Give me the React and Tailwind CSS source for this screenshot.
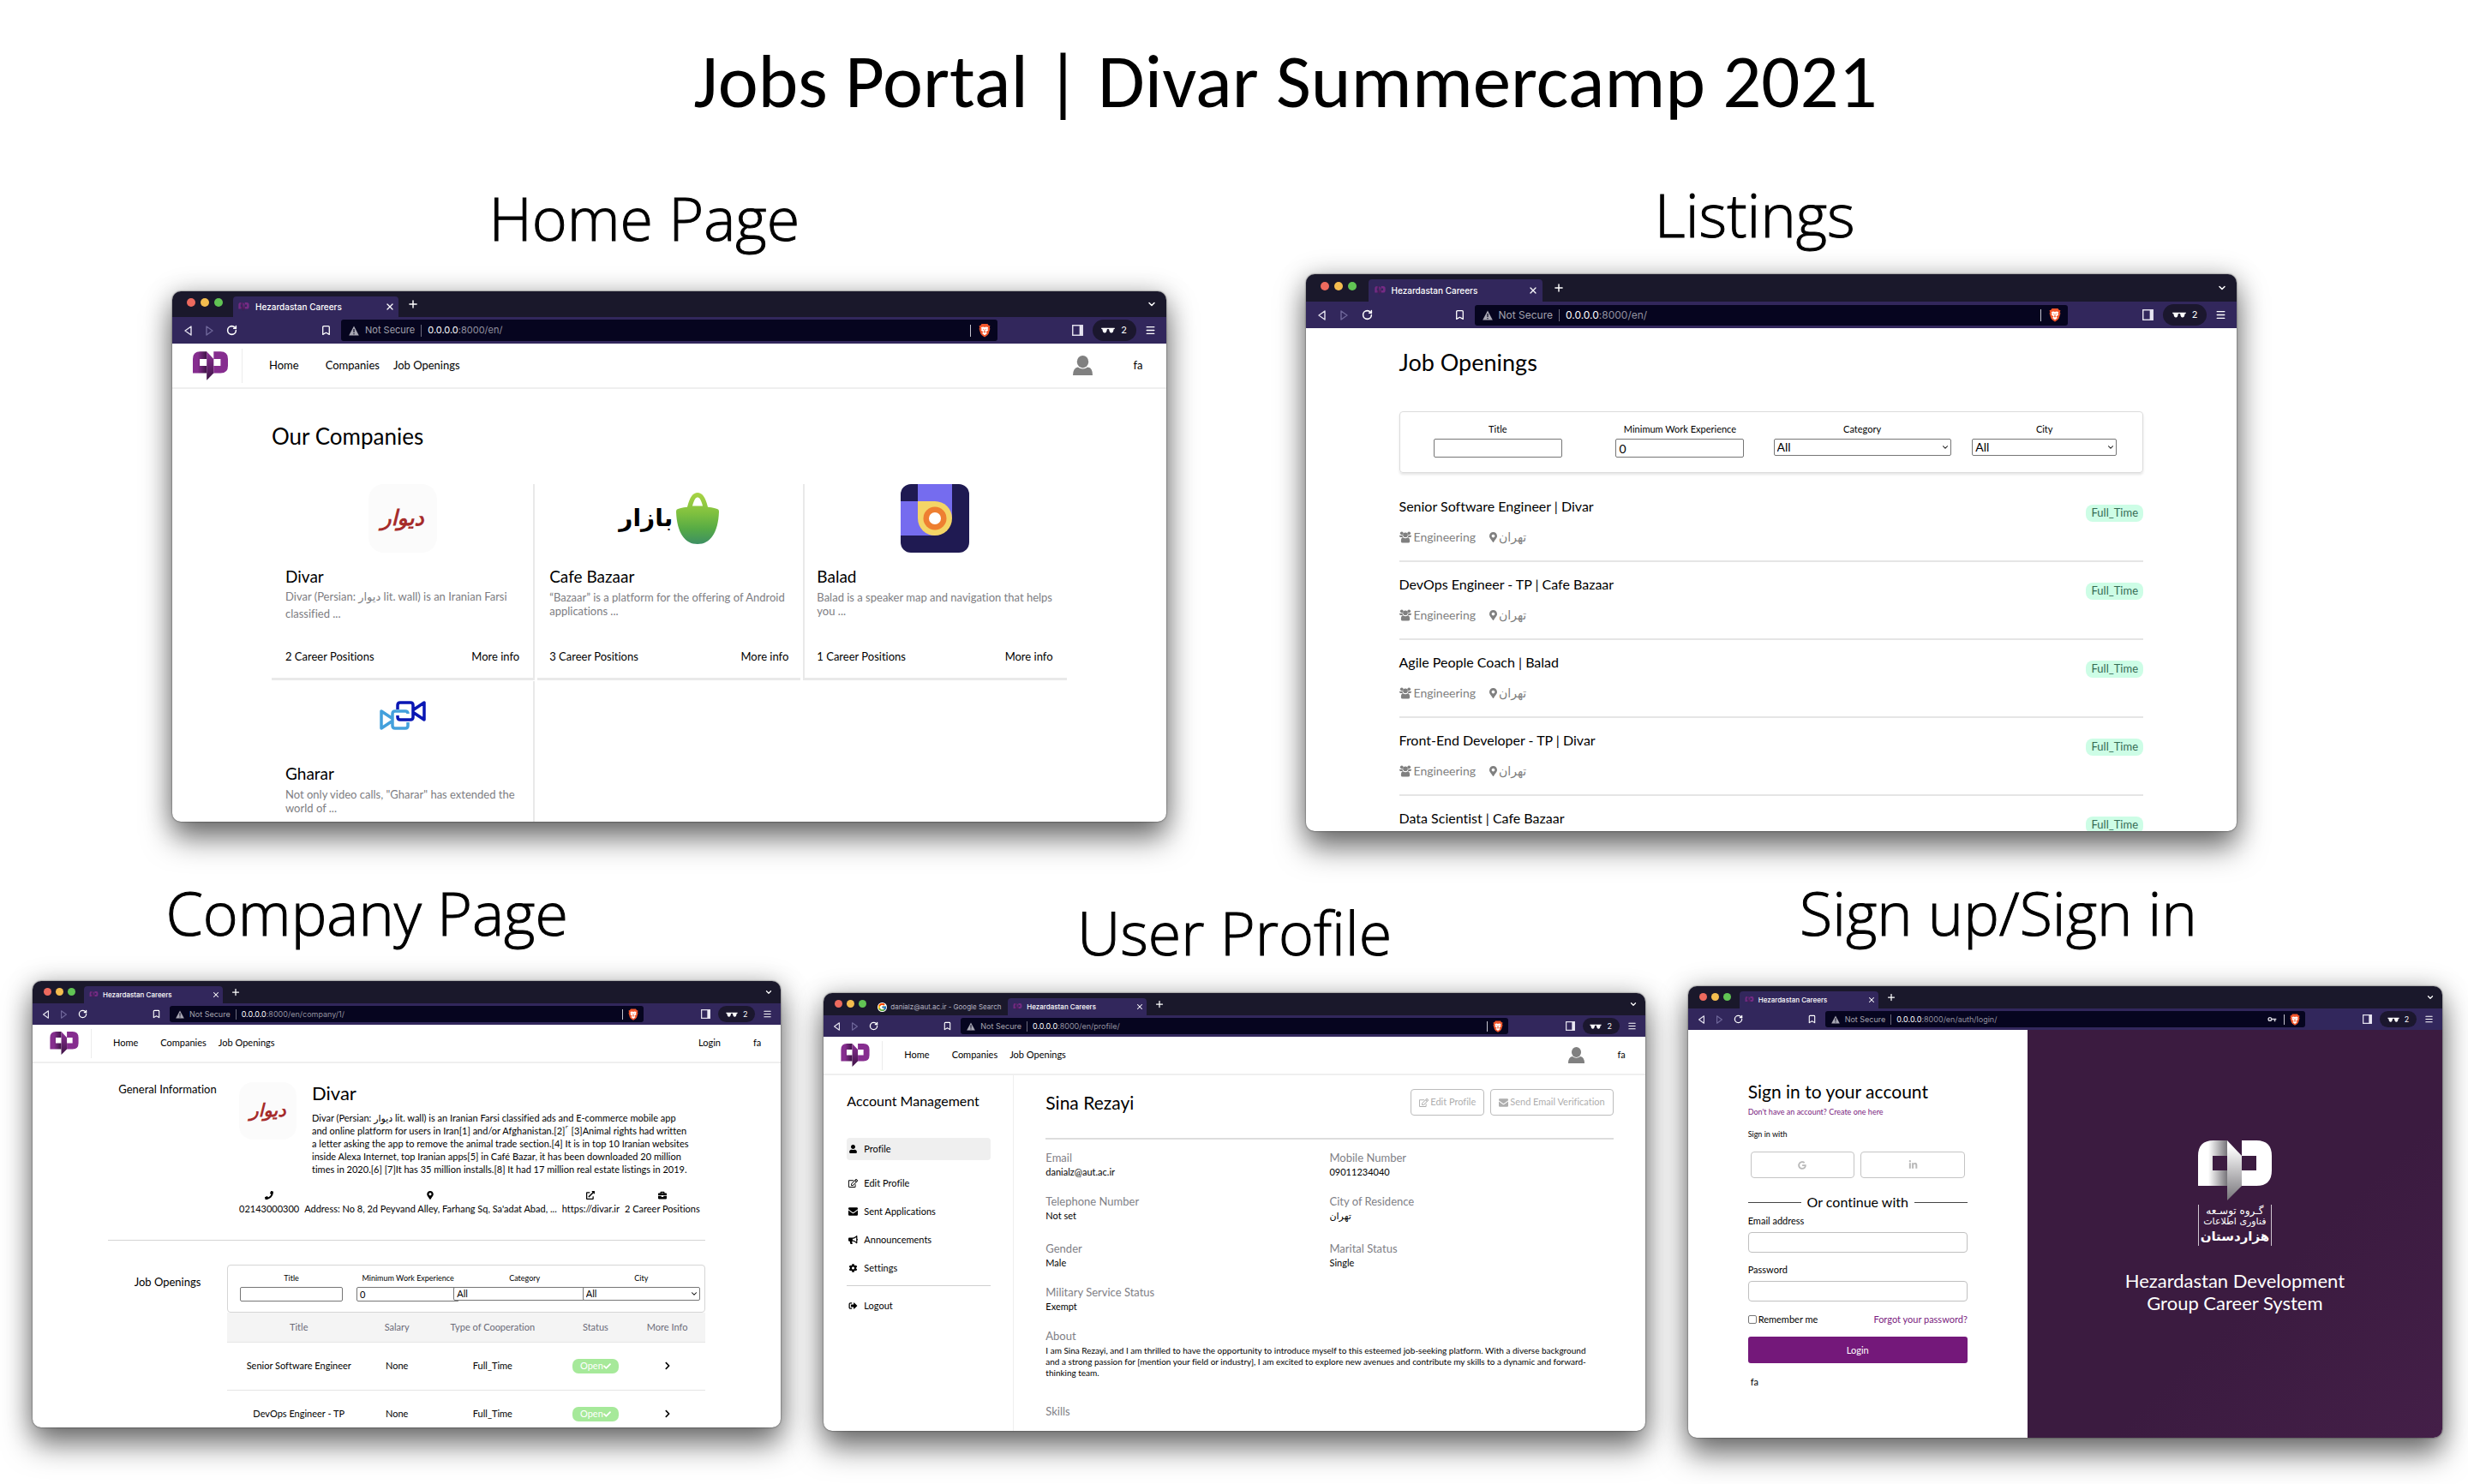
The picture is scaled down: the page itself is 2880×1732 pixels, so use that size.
import React, { useId } from 'react';
import {
  FaMapMarkerAlt, FaPhone, FaExternalLinkAlt, FaBriefcase, FaChevronRight, FaCheck,
  FaUser, FaRegEdit, FaBullhorn, FaCog, FaSignOutAlt, FaGoogle, FaLinkedinIn,
} from 'react-icons/fa';
import { FcGoogle } from 'react-icons/fc';
import { X, Plus, ChevronDown, Bookmark, RotateCw, Menu } from 'lucide-react';

/* ---------- logos and small drawings ---------- */

function HezardastanLogo({ className, tone = 'purple' }) {
  const id = useId();
  const purple = tone === 'purple';
  const main = purple ? '#862d8f' : '#ffffff';
  const shade = purple ? '#3d1345' : '#77757a';
  return (
    <svg viewBox="0 0 86 70" className={className} aria-label="Hezardastan" role="img">
      <defs>
        <linearGradient id={id + 'l'} x1="0" x2="1" y1="0" y2="0">
          <stop offset="0.35" stopColor={main} />
          <stop offset="1" stopColor={shade} />
        </linearGradient>
        <linearGradient id={id + 'r'} x1="0" x2="0" y1="0" y2="1">
          <stop offset="0.1" stopColor={main} />
          <stop offset="1" stopColor={shade} />
        </linearGradient>
      </defs>
      <path fillRule="evenodd" fill={`url(#${id}l)`} d="M0 53V18Q0 0 18 0H34V53ZM17 18V35H34V18Z" />
      <path fillRule="evenodd" fill={main} d="M51 0H68Q86 0 86 18V35Q86 53 68 53H51ZM51 18V35H68V18Z" />
      <path fill={`url(#${id}r)`} d="M34 0L51 18V53L34 70Z" />
    </svg>
  );
}

function DivarLogo({ small }) {
  return (
    <div
      lang="fa"
      className={
        'flex shrink-0 items-center justify-center bg-[#fbfbfb] font-["DejaVu_Sans",sans-serif] font-bold italic text-[#a62c2b] ' +
        (small ? 'h-[67px] w-[67px] rounded-[16px] text-[21px]' : 'h-20 w-20 rounded-[18px] text-[25px]')
      }
    >
      دیوار
    </div>
  );
}

function BazaarLogo() {
  const id = useId();
  return (
    <div className="flex h-20 items-center justify-center gap-1">
      <span lang="fa" className="font-['DejaVu_Sans',sans-serif] text-[28px] font-bold text-black">بازار</span>
      <svg viewBox="0 0 50 54" className="h-[60px] w-[50px]" preserveAspectRatio="none" aria-hidden="true">
        <defs>
          <linearGradient id={id} x1="0" x2="0" y1="0" y2="1">
            <stop offset="0" stopColor="#a9d444" />
            <stop offset="0.4" stopColor="#7fc03f" />
            <stop offset="0.7" stopColor="#57ab45" />
            <stop offset="1" stopColor="#3d8f63" />
          </linearGradient>
        </defs>
        <path
          fillRule="evenodd"
          fill={`url(#${id})`}
          d="M13 15C16 4 20 0 25 0S34 4 37 15C43 15.500 47 16.500 49 17.500Q50 18 50 20C49 42 40 54 25 54S1 42 0 20Q0 18 1 17.500C3 16.500 7 15.500 13 15ZM19 14H31C29 7 27 5 25 5S21 7 19 14Z"
        />
      </svg>
    </div>
  );
}

function BaladLogo() {
  return (
    <svg viewBox="0 0 80 80" className="h-20 w-20 rounded-[12px]" aria-hidden="true">
      <rect width="80" height="80" fill="#1f1a52" />
      <rect x="20" width="40" height="40" fill="#756cef" />
      <rect y="20" width="40" height="40" fill="#756cef" />
      <path d="M0 40H20V60H40V40Z" fill="#756cef" />
      <rect y="40" width="40" height="20" fill="#756cef" />
      <path d="M20 20H40A20 20 0 1 1 20 40Z" fill="#f4d566" />
      <circle cx="40" cy="40" r="13.500" fill="#ee7f31" />
      <circle cx="40" cy="40" r="7" fill="#fff" />
    </svg>
  );
}

function GhararLogo() {
  return (
    <div className="flex h-20 w-20 items-center justify-center">
      <svg viewBox="0 0 54 34" className="h-[34px] w-[54px]" fill="none" strokeWidth="3.500" strokeLinejoin="round" aria-hidden="true">
        <path stroke="#0a17b4" d="M21 10V5Q21 2 24 2H36Q39 2 39 5V19Q39 22 36 22H24Q21 22 21 19V17M40 10L52 2V22L40 14" />
        <path stroke="#43a0dc" d="M33 15Q33 12 30 12H18Q15 12 15 15V29Q15 32 18 32H30Q33 32 33 29V25M14 20L2 12V32L14 24" />
      </svg>
    </div>
  );
}

function BraveIcon({ className }) {
  return (
    <svg viewBox="0 0 24 28" className={className} aria-hidden="true">
      <path fill="#f1562b" d="M6 1H18L20 4L23 5L22 9L23 11L20 21Q19 24 12 27.500Q5 24 4 21L1 11L2 9L1 5L4 4Z" />
      <path fill="#fff" d="M5 8L9 7L12 8L15 7L19 8L18 12L19 14L15 17L15 18L17 20L12 24L7 20L9 18L9 17L5 14L6 12Z" />
      <path fill="#f1562b" d="M8 10.500L11 12L10.500 14ZM16 10.500L13 12L13.500 14ZM11 14H13L13 17L14.500 18L12 19L9.500 18L11 17Z" />
    </svg>
  );
}

function Sunglasses({ className }) {
  return (
    <svg viewBox="0 0 20 9" className={className} fill="currentColor" aria-hidden="true">
      <path d="M0 1H20V2.500L18.500 3Q18 8.500 15 8.500T11.500 3Q10 2.200 8.500 3Q8 8.500 5 8.500T1.500 3L0 2.500Z" />
    </svg>
  );
}

function PersonIcon({ className }) {
  return (
    <svg viewBox="0 0 24 24" className={className} fill="#808080" aria-hidden="true">
      <ellipse cx="12" cy="7.500" rx="7" ry="7.500" />
      <path d="M0 24Q0 15 6 14Q12 18.500 18 14Q24 15 24 24Z" />
    </svg>
  );
}

function GroupIcon({ className }) {
  return (
    <svg viewBox="0 0 30 28" className={className} fill="currentColor" aria-hidden="true">
      <circle cx="6" cy="4" r="4" />
      <circle cx="24" cy="4" r="4" />
      <circle cx="15" cy="8" r="6" />
      <path d="M0 9Q6 10.500 8 8Q7 12 9 14H3Q0 14 0 11ZM30 9Q24 10.500 22 8Q23 12 21 14H27Q30 14 30 11Z" />
      <path d="M4 24Q4 15 9 14.500Q15 18.500 21 14.500Q26 15 26 24Q26 28 22 28H8Q4 28 4 24Z" />
    </svg>
  );
}

function EnvelopeIcon({ className }) {
  return (
    <svg viewBox="0 0 14 12" className={className} fill="currentColor" aria-hidden="true">
      <path d="M1.500 0H12.500Q14 0 14 1.500V2.500L8 7Q7 7.800 6 7L0 2.500V1.500Q0 0 1.500 0Z" />
      <path d="M0 4L5.500 8.200Q7 9.300 8.500 8.200L14 4V10.500Q14 12 12.500 12H1.500Q0 12 0 10.500Z" />
    </svg>
  );
}

function Triangle({ dim, className }) {
  return (
    <svg viewBox="0 0 10 12" className={className} fill="none" strokeWidth="1.400" strokeLinejoin="round" stroke={dim ? '#6f679a' : '#e4e2ee'} aria-hidden="true">
      {dim ? <path d="M1.500 1L8.500 6L1.500 11Z" /> : <path d="M8.500 1L1.500 6L8.500 11Z" />}
    </svg>
  );
}

function WarningIcon({ className }) {
  return (
    <svg viewBox="0 0 12 12" className={className} aria-hidden="true">
      <path d="M6 0.500L11.800 11.500H0.200Z" fill="#a9a8b4" />
      <path d="M5.400 4H6.600V8H5.400ZM5.400 9H6.600V10.200H5.400Z" fill="#06051f" />
    </svg>
  );
}

function PanelIcon({ className }) {
  return (
    <svg viewBox="0 0 12 12" className={className} aria-hidden="true">
      <rect x="0.700" y="0.700" width="10.600" height="10.600" fill="none" stroke="#e9e7f2" strokeWidth="1.300" />
      <rect x="8" y="1" width="3" height="10" fill="#e9e7f2" />
    </svg>
  );
}

function KeyIcon({ className }) {
  return (
    <svg viewBox="0 0 12 8" className={className} fill="none" stroke="#d6d5de" strokeWidth="1.600" aria-hidden="true">
      <circle cx="3" cy="4" r="2.100" />
      <path d="M5 4H11.500M9.500 4V7" />
    </svg>
  );
}

/* ---------- browser chrome ---------- */

const LG = {
  bar: 'h-[30px] pl-[17px]', lights: 'gap-[6px] pb-1', light: 'h-[10px] w-[10px]', tabs: 'ml-3', tab: 'h-6 w-[193px] pl-[6px] pr-1',
  fav: 'h-[10px] w-[13px]', tabText: 'ml-[7px] text-[10px]', x: 'h-3 w-3', plus: 'ml-[10px] h-[14px] w-[14px]', down: 'mr-[11px] h-3 w-3',
  tool: 'h-[31px]', side: 'w-[197px]', left: 'pl-[13px] pr-[11px]', nav: 'gap-[14px]', tri: 'h-3 w-[11px]', icon: 'h-[13px] w-[13px]',
  url: 'h-[25px] rounded-[3px] text-[11px]', warn: 'ml-[9px] mr-[7px] h-3 w-3', sep: 'mx-[7px] h-[14px]', shield: 'ml-[9px] mr-2 h-[17px] w-[14px]',
  pill: 'ml-[11px] mr-[10px] h-[25px] w-[51px] text-[11px] gap-[7px]', glasses: 'h-[7px] w-4', right: 'pr-3', sepR: 'h-[14px]',
};

const SIZES = {
  lg: LG,
  xl: {
    ...LG,
    bar: 'h-8 pl-[17px]', tabs: 'ml-[14px]', tab: 'h-[26px] w-[203px] pl-[7px] pr-[5px]', tabText: 'ml-[7px] text-[10px]', plus: 'ml-3 h-[14px] w-[14px]',
    url: 'h-6 rounded-[3px] text-[12px]', nav: 'gap-[15px]',
  },
  sm: {
    bar: 'h-[26px] pl-[13px]', lights: 'gap-[5px] pb-px', light: 'h-[9px] w-[9px]', tabs: 'ml-[10px]', tab: 'h-5 w-[162px] pl-[6px] pr-[3px]',
    fav: 'h-2 w-[11px]', tabText: 'ml-[5px] text-[8px]', x: 'h-[10px] w-[10px]', plus: 'ml-[9px] h-3 w-3', down: 'mr-[9px] h-[10px] w-[10px]',
    tool: 'h-[25px]', side: 'w-[160px]', left: 'pl-[11px] pr-[10px]', nav: 'gap-[12px]', tri: 'h-[10px] w-[9px]', icon: 'h-[11px] w-[11px]',
    url: 'h-[19px] rounded-[3px] text-[9px]', warn: 'ml-[7px] mr-[6px] h-[10px] w-[10px]', sep: 'mx-[6px] h-3', shield: 'ml-[6px] mr-[6px] h-[14px] w-3',
    pill: 'ml-[9px] mr-[9px] h-[19px] w-[43px] text-[9px] gap-[6px]', glasses: 'h-[6px] w-[14px]', right: 'pr-[10px]', sepR: 'h-3',
  },
};

function BrowserWindow({ size = 'sm', path, extraTab, hasKey, className = '', children }) {
  const s = SIZES[size];
  return (
    <div className={'flex flex-col overflow-hidden rounded-[10px] bg-white shadow-[0_0_2px_rgba(0,0,0,0.7),0_20px_34px_rgba(0,0,0,0.5),0_2px_30px_rgba(0,0,0,0.25)] ' + className}>
      <div className={'flex shrink-0 items-center bg-[#1a182b] text-white ' + s.bar}>
        <div className={'flex shrink-0 ' + s.lights}>
          <span className={'rounded-full bg-[#ed6a5e] ' + s.light} />
          <span className={'rounded-full bg-[#f4bd4f] ' + s.light} />
          <span className={'rounded-full bg-[#61c454] ' + s.light} />
        </div>
        <div className={'flex items-end self-end ' + s.tabs}>
          {extraTab && (
            <div className="flex h-5 w-[155px] items-center gap-1 pl-[3px] font-['Inter',sans-serif] text-[8px] text-[#b5b3c2]">
              <FcGoogle className="h-[11px] w-[11px] rounded-full bg-white" />
              <span className="whitespace-nowrap">{extraTab}</span>
            </div>
          )}
          <div className={'flex items-center rounded-t-[4px] bg-[#32275c] ' + s.tab}>
            <HezardastanLogo className={'opacity-80 ' + s.fav} />
            <span className={"whitespace-nowrap font-['Inter',sans-serif] font-medium " + s.tabText}>Hezardastan Careers</span>
            <button aria-label="Close tab" className="ml-auto"><X strokeWidth={2.5} className={s.x} /></button>
          </div>
        </div>
        <button aria-label="New tab"><Plus strokeWidth={2.5} className={s.plus} /></button>
        <button aria-label="List tabs" className="ml-auto"><ChevronDown strokeWidth={3} className={s.down} /></button>
      </div>
      <div className={"flex shrink-0 items-center bg-[#32275c] font-['Inter',sans-serif] text-white " + s.tool}>
        <div className={'flex shrink-0 items-center justify-between ' + s.side + ' ' + s.left}>
          <div className={'flex items-center ' + s.nav}>
            <button aria-label="Back"><Triangle className={s.tri} /></button>
            <button aria-label="Forward"><Triangle dim className={s.tri} /></button>
            <button aria-label="Reload"><RotateCw strokeWidth={2.8} className={s.icon} /></button>
          </div>
          <button aria-label="Bookmark"><Bookmark strokeWidth={2.4} className={s.icon} /></button>
        </div>
        <div className={'flex min-w-0 flex-1 items-center bg-[#06051f] ' + s.url}>
          <WarningIcon className={s.warn} />
          <span className="whitespace-nowrap text-[#a3a2ae]">Not Secure</span>
          <span className={'w-px bg-[#6b6a7d] ' + s.sep} />
          <span className="whitespace-nowrap text-white">0.0.0.0<span className="text-[#92919f]">:8000{path}</span></span>
          <span className="ml-auto flex items-center">
            {hasKey && <KeyIcon className="mr-2 h-[7px] w-[11px]" />}
            <span className={'w-px bg-[#c5c4cf] ' + s.sepR} />
            <BraveIcon className={s.shield} />
          </span>
        </div>
        <div className={'flex shrink-0 items-center justify-end ' + s.side + ' ' + s.right}>
          <button aria-label="Side panel"><PanelIcon className={s.icon} /></button>
          <button className={'flex items-center justify-center rounded-full bg-[#1b172e] ' + s.pill}>
            <Sunglasses className={s.glasses} />2
          </button>
          <button aria-label="Menu"><Menu strokeWidth={2.4} className={s.icon} /></button>
        </div>
      </div>
      {children}
    </div>
  );
}

function NavBar({ size = 'sm', user }) {
  const lg = size === 'lg';
  return (
    <nav className={'flex shrink-0 items-center border-b-2 border-[#efefef] ' + (lg ? 'h-[53px] pl-6 pr-[27px] text-[13px]' : 'h-[45px] pl-5 pr-[23px] text-[11px]')}>
      <HezardastanLogo className={lg ? 'h-[34px] w-[41px]' : 'h-[27px] w-[34px]'} />
      <span className={'w-px bg-[#ececec] ' + (lg ? 'ml-4 mr-[31px] h-10' : 'ml-[14px] mr-[25px] h-[34px]')} />
      <a href="#home">Home</a>
      <a href="#companies" className={lg ? 'ml-[31px]' : 'ml-[26px]'}>Companies</a>
      <a href="#jobs" className={lg ? 'ml-4' : 'ml-[14px]'}>Job Openings</a>
      <span className="ml-auto flex items-center">
        {user
          ? <a href="#account" aria-label="Account"><PersonIcon className={lg ? 'h-[23px] w-[23px]' : 'h-[19px] w-[19px]'} /></a>
          : <a href="#login">Login</a>}
      </span>
      <a href="#fa" className={lg ? 'ml-[48px]' : 'ml-[38px]'}>fa</a>
    </nav>
  );
}

/* ---------- filters ---------- */

function FilterSelect({ label, className }) {
  const id = useId();
  return (
    <div className="flex flex-col items-center">
      <label htmlFor={id}>{label}</label>
      <div className={'relative mt-1 shrink-0 ' + className}>
        <select id={id} className="h-full w-full appearance-none rounded-[2px] border border-[#767676] bg-white pl-[3px]">
          <option>All</option>
        </select>
        <ChevronDown className="pointer-events-none absolute top-1/2 right-[2px] h-[10px] w-[10px] -translate-y-1/2" strokeWidth={2.5} />
      </div>
    </div>
  );
}

function FilterInput({ label, className, ...rest }) {
  const id = useId();
  return (
    <div className="flex flex-col items-center whitespace-nowrap">
      <label htmlFor={id}>{label}</label>
      <input id={id} className={'mt-1 shrink-0 rounded-[2px] border border-[#767676] bg-white pl-[3px] ' + className} {...rest} />
    </div>
  );
}

/* ---------- pages ---------- */

const COMPANIES = [
  { name: 'Divar', logo: <DivarLogo />, lines: ['Divar (Persian: دیوار lit. wall) is an Iranian Farsi', 'classified ...'], jobs: 2, tall: true, edge: 'border-b-3 border-r-2 px-4' },
  { name: 'Cafe Bazaar', logo: <BazaarLogo />, lines: ['“Bazaar” is a platform for the offering of Android', 'applications ...'], jobs: 3, edge: 'border-b-3 px-[14px]' },
  { name: 'Balad', logo: <BaladLogo />, lines: ['Balad is a speaker map and navigation that helps', 'you ...'], jobs: 1, edge: 'border-b-3 border-l-2 pl-[14px] pr-4' },
  { name: 'Gharar', logo: <GhararLogo />, lines: ['Not only video calls, "Gharar" has extended the', 'world of ...'], edge: 'border-r-2 px-4' },
];

function HomePage() {
  return (
    <BrowserWindow size="lg" path="/en/" className="h-[619px]">
      <NavBar size="lg" user />
      <main className="px-[116px] pt-[39px]">
        <h3 className="text-[26px] leading-8">Our Companies</h3>
        <div className="mt-10 grid grid-cols-3 gap-x-[3px] gap-y-px">
          {COMPANIES.map((c) => (
            <article key={c.name} className={'flex h-[229px] flex-col border-[#e9e9e9] pb-[17px] ' + c.edge}>
              <div className="flex justify-center">{c.logo}</div>
              <h4 className="mt-4 text-[19px] leading-6">{c.name}</h4>
              <p className={'whitespace-nowrap text-[13px] text-[#7d7d82] ' + (c.tall ? 'mt-px leading-5' : 'mt-1 leading-4')}>
                {c.lines[0]}<br />{c.lines[1]}
              </p>
              {c.jobs && (
                <div className="mt-auto flex justify-between text-[13px] leading-4">
                  <span>{c.jobs} Career Positions</span>
                  <a href="#company">More info</a>
                </div>
              )}
            </article>
          ))}
        </div>
      </main>
    </BrowserWindow>
  );
}

const LISTINGS = [
  { title: 'Senior Software Engineer | Divar', team: 'Engineering', city: 'تهران' },
  { title: 'DevOps Engineer - TP | Cafe Bazaar', team: 'Engineering', city: 'تهران' },
  { title: 'Agile People Coach | Balad', team: 'Engineering', city: 'تهران' },
  { title: 'Front-End Developer - TP | Divar', team: 'Engineering', city: 'تهران' },
  { title: 'Data Scientist | Cafe Bazaar' },
];

function ListingsPage() {
  return (
    <BrowserWindow size="xl" path="/en/" className="h-[650px]">
      <main className="px-[109px] pt-6">
        <h3 className="text-[27px] leading-8">Job Openings</h3>
        <form className="mt-[41px] grid h-[72px] grid-cols-4 rounded-[4px] border border-[#dcdcdc] px-2 pt-[13px] text-[11px] leading-[14px] shadow-[0_2px_3px_rgba(0,0,0,0.1)]">
          <FilterInput label="Title" type="text" className="h-[22px] w-[150px] text-[14px]" />
          <FilterInput label="Minimum Work Experience" type="number" defaultValue="0" className="h-[22px] w-[150px] text-[14px]" />
          <FilterSelect label="Category" className="h-5 w-[207px] text-[14px]" />
          <FilterSelect label="City" className="h-5 w-[169px] text-[14px]" />
        </form>
        <ul className="mt-[13px]">
          {LISTINGS.map((job) => (
            <li key={job.title} className="flex items-start justify-between border-b-2 border-[#e5e5e5] pt-4 pb-[17px]">
              <div>
                <h4 className="text-[16px] leading-5">{job.title}</h4>
                {job.team && (
                  <div className="mt-4 flex items-center text-[14px] leading-5 text-[#808080]">
                    <GroupIcon className="mr-[3px] h-[14px] w-[14px]" />{job.team}
                    <FaMapMarkerAlt className="mr-[2px] ml-4 h-3 w-[9px]" />
                    <span lang="fa">{job.city}</span>
                  </div>
                )}
              </div>
              <span className="mt-2 flex h-5 items-center rounded-[8px] bg-[#cdfde6] px-[6px] text-[13px] text-[#356b54]">Full_Time</span>
            </li>
          ))}
        </ul>
      </main>
    </BrowserWindow>
  );
}

function InfoItem({ icon: Icon, children }) {
  return (
    <span className="flex flex-col items-center gap-1">
      <Icon className="h-[10px] w-[10px]" />
      <span className="whitespace-nowrap">{children}</span>
    </span>
  );
}

function CompanyPage() {
  return (
    <BrowserWindow path="/en/company/1/" className="h-[521px]">
      <NavBar />
      <main className="px-[88px]">
        <section className="flex border-b border-[#d5d5d5] pt-[22px] pb-[29px]">
          <h3 className="w-[139px] shrink-0 text-center text-[13px] leading-4">General Information</h3>
          <div className="min-w-0 flex-1 pl-[14px]">
            <div className="flex gap-[18px]">
              <DivarLogo small />
              <div>
                <h4 className="text-[22px] leading-[26px]">Divar</h4>
                <p className="mt-2 text-[11px] leading-[15px] whitespace-nowrap">
                  Divar (Persian: دیوار lit. wall) is an Iranian Farsi classified ads and E-commerce mobile app<br />
                  and online platform for users in Iran[1] and/or Afghanistan.[2]˹ [3]Animal rights had written<br />
                  a letter asking the app to remove the animal trade section.[4] It is in top 10 Iranian websites<br />
                  inside Alexa Internet, top Iranian apps[5] in Café Bazar, it has been downloaded 20 million<br />
                  times in 2020.[6] [7]It has 35 million installs.[8] It had 17 million real estate listings in 2019.
                </p>
              </div>
            </div>
            <div className="mt-[18px] flex gap-[6px] text-[11px] leading-[14px]">
              <InfoItem icon={FaPhone}>02143000300</InfoItem>
              <InfoItem icon={FaMapMarkerAlt}>Address: No 8, 2d Peyvand Alley, Farhang Sq, Sa'adat Abad, ...</InfoItem>
              <InfoItem icon={FaExternalLinkAlt}>https://divar.ir</InfoItem>
              <InfoItem icon={FaBriefcase}>2 Career Positions</InfoItem>
            </div>
          </div>
        </section>
        <section className="mt-7 flex">
          <h3 className="w-[139px] shrink-0 pt-[12px] text-center text-[13px] leading-4">Job Openings</h3>
          <div className="min-w-0 flex-1">
            <form className="grid h-14 grid-cols-4 rounded-[4px] border border-[#d5d5d5] px-[6px] pt-[9px] text-[9px] leading-3">
              <FilterInput label="Title" type="text" className="h-[17px] w-[120px] text-[11px]" />
              <FilterInput label="Minimum Work Experience" type="number" defaultValue="0" className="h-[17px] w-[120px] text-[11px]" />
              <FilterSelect label="Category" className="h-4 w-[166px] text-[11px]" />
              <FilterSelect label="City" className="h-4 w-[137px] text-[11px]" />
            </form>
            <table className="w-full table-fixed text-center text-[11px]">
              <colgroup>
                <col className="w-[30%]" /><col className="w-[11%]" /><col className="w-[29%]" /><col className="w-[14%]" /><col />
              </colgroup>
              <thead>
                <tr className="h-[34px] border-b border-[#e5e5e5] bg-[#f4f4f4] text-[#6b6b78]">
                  <th className="font-normal">Title</th>
                  <th className="font-normal">Salary</th>
                  <th className="font-normal">Type of Cooperation</th>
                  <th className="font-normal">Status</th>
                  <th className="font-normal">More Info</th>
                </tr>
              </thead>
              <tbody>
                {['Senior Software Engineer', 'DevOps Engineer - TP'].map((job) => (
                  <tr key={job} className="h-14 border-b border-[#e5e5e5]">
                    <td>{job}</td>
                    <td>None</td>
                    <td>Full_Time</td>
                    <td>
                      <span className="inline-flex h-[17px] w-[54px] items-center justify-center rounded-[7px] bg-[#a6e99a] text-white">
                        Open<FaCheck className="h-[9px] w-[9px]" />
                      </span>
                    </td>
                    <td><a href="#job" aria-label={'More about ' + job}><FaChevronRight className="mx-auto h-[10px] w-2" /></a></td>
                  </tr>
                ))}
              </tbody>
            </table>
          </div>
        </section>
      </main>
    </BrowserWindow>
  );
}

function SideItem({ icon: Icon, active, children }) {
  return (
    <a href="#account" className={'flex h-[26px] items-center gap-[7px] rounded-[4px] pl-[2px] ' + (active ? 'mb-[7px] bg-[#efefef]' : '')}>
      <Icon className="h-[10px] w-[11px]" />{children}
    </a>
  );
}

function Field({ label, children }) {
  return (
    <div>
      <dt className="text-[13px] leading-4 text-[#808086]">{label}</dt>
      <dd className="text-[11px] leading-[18px]">{children}</dd>
    </div>
  );
}

function ProfilePage() {
  return (
    <BrowserWindow path="/en/profile/" extraTab="danialz@aut.ac.ir - Google Search">
      <NavBar user />
      <div className="flex flex-1">
        <aside className="w-[222px] shrink-0 border-r border-[#efefef] pt-5 pr-[26px] pl-[27px] text-[11px]">
          <h3 className="text-[16px] leading-5">Account Management</h3>
          <div className="mt-[33px] flex flex-col gap-[7px]">
            <SideItem icon={FaUser} active>Profile</SideItem>
            <SideItem icon={FaRegEdit}>Edit Profile</SideItem>
            <SideItem icon={EnvelopeIcon}>Sent Applications</SideItem>
            <SideItem icon={FaBullhorn}>Announcements</SideItem>
            <SideItem icon={FaCog}>Settings</SideItem>
            <hr className="mb-[3px] border-[#cfcfcf]" />
            <SideItem icon={FaSignOutAlt}>Logout</SideItem>
          </div>
        </aside>
        <main className="min-w-0 flex-1 pt-4 pr-[37px] pb-[15px] pl-[37px]">
          <div className="flex items-center justify-between border-b-2 border-[#dddddd] pb-[26px]">
            <h3 className="text-[21px] leading-[26px]">Sina Rezayi</h3>
            <div className="flex gap-[7px] text-[11px] text-[#aeaeae]">
              <button className="flex h-[31px] items-center gap-[2px] rounded-[4px] border border-[#bcbcbc] px-[9px]"><FaRegEdit className="h-[10px] w-[11px]" />Edit Profile</button>
              <button className="flex h-[31px] items-center gap-[2px] rounded-[4px] border border-[#bcbcbc] px-[9px]"><EnvelopeIcon className="h-[10px] w-[11px]" />Send Email Verification</button>
            </div>
          </div>
          <dl className="mt-[13px] grid grid-cols-2 gap-y-[17px]">
            <Field label="Email">danialz@aut.ac.ir</Field>
            <Field label="Mobile Number">09011234040</Field>
            <Field label="Telephone Number">Not set</Field>
            <div className="pb-1"><Field label="City of Residence"><span lang="fa">تهران</span></Field></div>
            <Field label="Gender">Male</Field>
            <Field label="Marital Status">Single</Field>
            <Field label="Military Service Status">Exempt</Field>
          </dl>
          <h4 className="mt-[17px] text-[13px] leading-4 text-[#808086]">About</h4>
          <p className="mt-[3px] text-[10px] leading-[13px] whitespace-nowrap">
            I am Sina Rezayi, and I am thrilled to have the opportunity to introduce myself to this esteemed job-seeking platform. With a diverse background<br />
            and a strong passion for [mention your field or industry], I am excited to explore new avenues and contribute my skills to a dynamic and forward-<br />
            thinking team.
          </p>
          <h4 className="mt-[30px] text-[13px] leading-4 text-[#808086]">Skills</h4>
        </main>
      </div>
    </BrowserWindow>
  );
}

function SignInPage() {
  return (
    <BrowserWindow path="/en/auth/login/" hasKey>
      <div className="flex flex-1">
        <form className="w-[45%] px-[70px] pt-[59px] pb-[58px] text-[11px] leading-[14px]">
          <h3 className="text-[21px] leading-[26px]">Sign in to your account</h3>
          <a href="#signup" className="mt-[5px] block text-[9px] leading-3 text-[#7a1c80]">Don't have an account? Create one here</a>
          <p className="mt-[14px] text-[9px] leading-3">Sign in with</p>
          <div className="mt-[14px] grid grid-cols-2 gap-[7px] px-[3px] text-[#b9b9b9]">
            <button type="button" aria-label="Google" className="flex h-[31px] items-center justify-center rounded-[4px] border border-[#c4c4c4]"><FaGoogle className="h-[10px] w-[10px]" /></button>
            <button type="button" aria-label="LinkedIn" className="flex h-[31px] items-center justify-center rounded-[4px] border border-[#c4c4c4]"><FaLinkedinIn className="h-[11px] w-[11px]" /></button>
          </div>
          <div className="mt-[18px] flex items-center gap-[7px] text-[16px] leading-5">
            <span className="mt-px h-px flex-1 bg-[#444]" />Or continue with<span className="mt-px h-px flex-1 bg-[#444]" />
          </div>
          <label htmlFor="email" className="mt-[5px] block">Email address</label>
          <input id="email" type="email" className="mt-[6px] block h-6 w-full rounded-[4px] border border-[#c0c0c0] px-2" />
          <label htmlFor="password" className="mt-[13px] block">Password</label>
          <input id="password" type="password" className="mt-[6px] block h-6 w-full rounded-[4px] border border-[#c0c0c0] px-2" />
          <div className="mt-[14px] flex items-center justify-between">
            <label className="flex items-center gap-[2px]">
              <input type="checkbox" className="h-[10px] w-[10px] appearance-none rounded-[2px] border border-[#767676]" />Remember me
            </label>
            <a href="#forgot" className="text-[#7a1c80]">Forgot your password?</a>
          </div>
          <button type="submit" className="mt-[13px] h-[31px] w-full rounded-[3px] bg-[#74187a] text-white">Login</button>
          <a href="#fa" className="mt-[15px] ml-[3px] block">fa</a>
        </form>
        <div className="flex flex-1 flex-col items-center bg-linear-to-br from-[#3b1b40] from-60% to-[#441f48] pt-[129px] text-white">
          <HezardastanLogo tone="white" className="h-[70px] w-[86px]" />
          <div lang="fa" dir="rtl" className="mt-[5px] flex w-[86px] flex-col items-center border-x border-[#cfc6d0] font-['DejaVu_Sans',sans-serif] whitespace-nowrap">
            <span className="text-[12px] leading-[14px]">گـروه توسـعه</span>
            <span className="text-[11px] leading-3">فناوری اطلاعات</span>
            <span className="text-[15px] leading-[22px] font-bold">هزاردستان</span>
          </div>
          <p className="mt-[28px] text-center text-[22px] leading-[26px]">Hezardastan Development<br />Group Career System</p>
        </div>
      </div>
    </BrowserWindow>
  );
}

/* ---------- board ---------- */

function Shot({ title, className, titleClass, children }) {
  return (
    <section className={className}>
      <h2 className={"text-center font-['Open_Sans',sans-serif] text-[70px] leading-[96px] font-light whitespace-nowrap [-webkit-text-stroke:1px_black] " + titleClass}>{title}</h2>
      {children}
    </section>
  );
}

export default function App() {
  return (
    <div className="min-h-screen bg-white pb-[55px] font-['Lato','DejaVu_Sans',sans-serif] text-black [font-variant-ligatures:none]">
      <h1 className="pt-10 pl-[120px] text-center font-['Carlito','Lato',sans-serif] text-[89px] leading-[110px]">
        Jobs Portal | Divar Summercamp 2021
      </h1>
      <div className="grid grid-cols-[1159fr_1086fr] items-start gap-[163px] pr-[270px] pl-[201px]">
        <Shot title="Home Page" className="pt-[56px]" titleClass="mb-[38px] pr-[58px]"><HomePage /></Shot>
        <Shot title="Listings" className="pt-[52px]" titleClass="mb-[22px] pr-[38px]"><ListingsPage /></Shot>
      </div>
      <div className="grid grid-cols-[873fr_958fr_880fr] items-start gap-[50px] pr-[30px] pl-[38px]">
        <Shot title="Company Page" className="pt-[47px]" titleClass="mb-8 pr-[93px]"><CompanyPage /></Shot>
        <Shot title="User Profile" className="pt-[70px]" titleClass="mb-[23px]"><ProfilePage /></Shot>
        <Shot title="Sign up/Sign in" className="pt-[47px]" titleClass="mb-[38px] pr-[156px]"><SignInPage /></Shot>
      </div>
    </div>
  );
}
